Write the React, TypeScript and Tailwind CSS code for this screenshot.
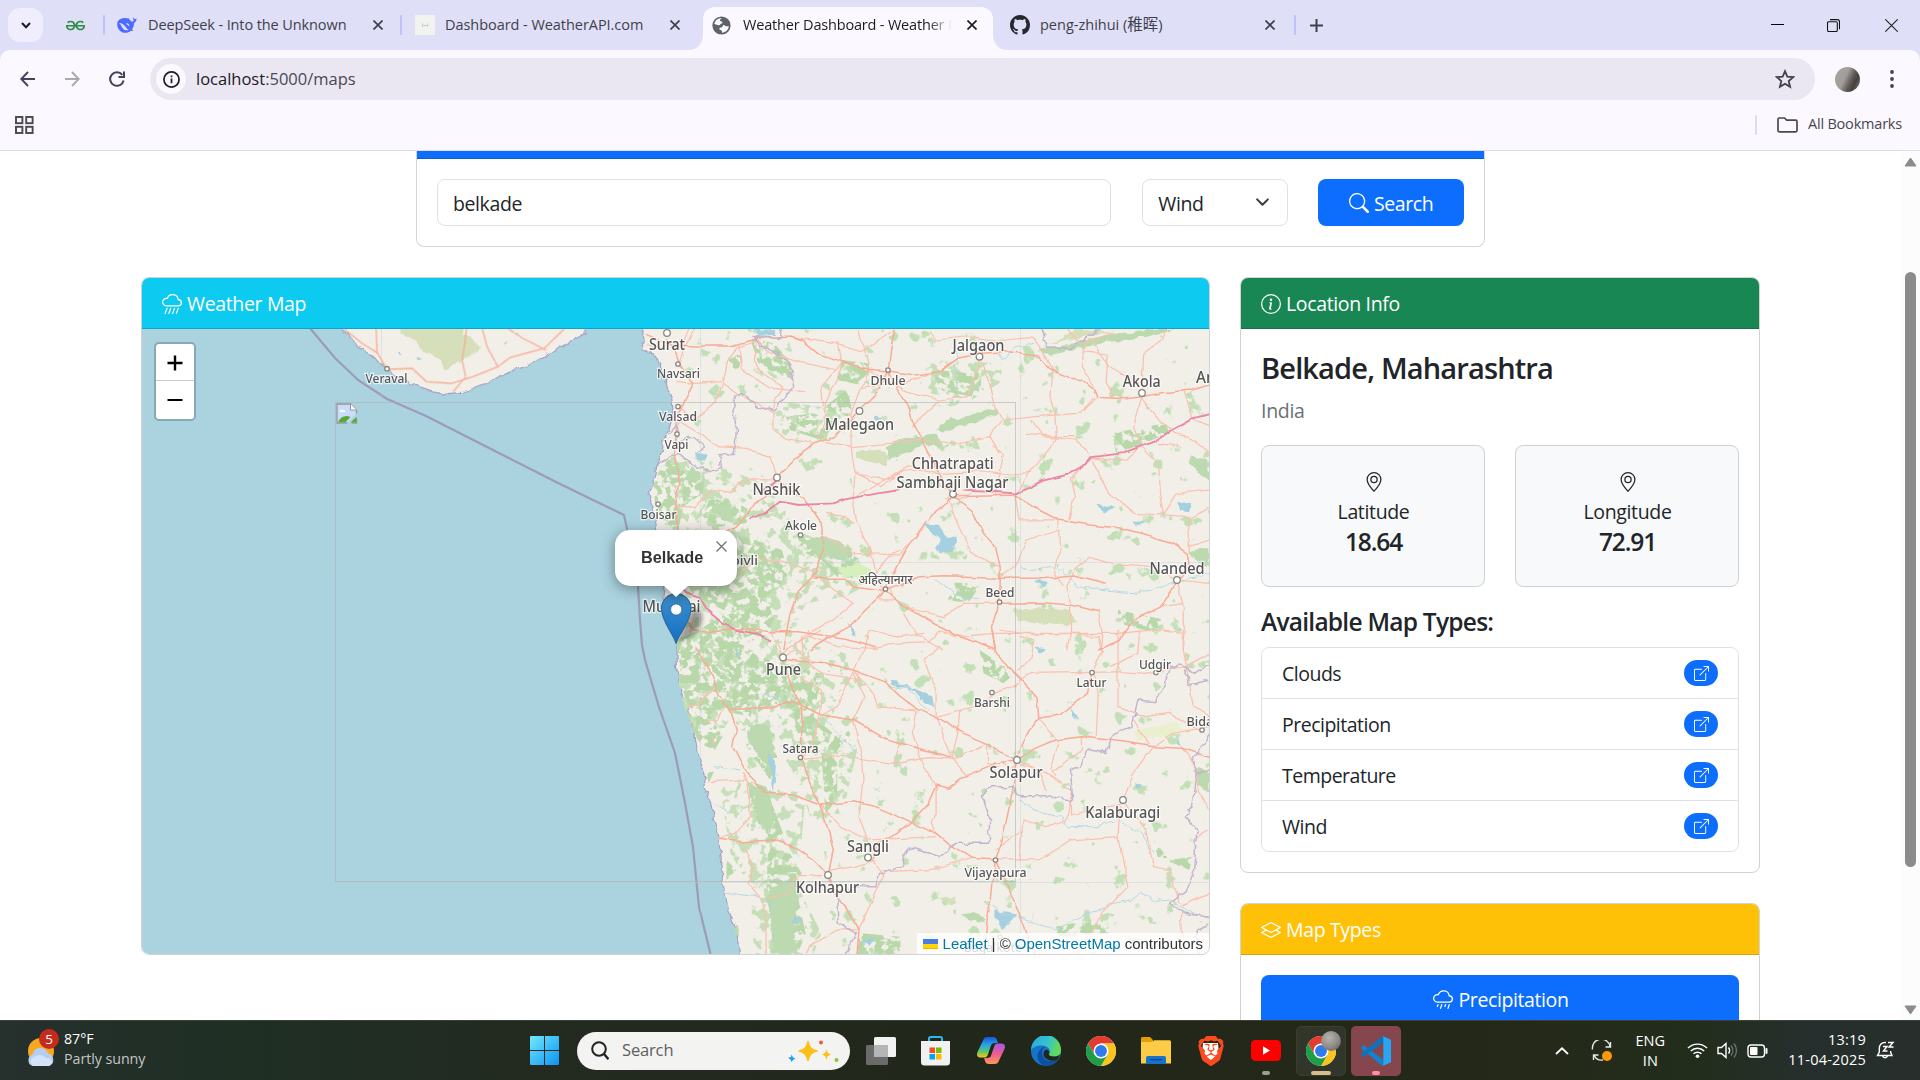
import React from "react";
import {
  BsBoxArrowUpRight,
  BsCloudRain,
  BsCloudRainHeavy,
  BsGeoAlt,
  BsGithub,
  BsInfoCircle,
  BsLayers,
  BsSearch,
} from "react-icons/bs";
import { SiBrave, SiGeeksforgeeks } from "react-icons/si";

/* ---------- Browser chrome ---------- */

function CloseMark({ color = "#3f3f4c" }: { color?: string }) {
  return (
    <svg viewBox="0 0 10 10" className="size-[10px] shrink-0" stroke={color} strokeWidth="1.7">
      <path d="M0.5 0.5L9.5 9.5M9.5 0.5L0.5 9.5" />
    </svg>
  );
}

function Divider() {
  return <div className="h-5 w-[2px] shrink-0 rounded-full bg-[#bfc1fb]" />;
}

function TabStrip() {
  return (
    <div className="flex h-[50px] shrink-0 items-center bg-[#dfdff7] pl-2 text-[14.5px] text-[#3f3f4c]">
      <div className="flex h-[34px] w-[35px] items-center justify-center rounded-[12px] bg-[#f0edff]">
        <svg viewBox="0 0 10 7" className="h-[7px] w-[10px]" fill="none" stroke="#1c1b23" strokeWidth="2">
          <path d="M1 1L5 5.2L9 1" />
        </svg>
      </div>
      <div className="flex w-[60px] justify-center pl-1">
        <SiGeeksforgeeks className="size-[19px] text-[#2f8d46]" />
      </div>
      <Divider />
      <div className="flex w-[295px] items-center pl-[12px]">
        <svg viewBox="0 0 20 16" className="h-4 w-5 shrink-0" fill="#4d6bfe">
          <path d="M19.6 1.6c-.7.6-1.5.5-2.2.3-.5-.6-.7-1.1-1.3-1.7-.2.9 0 1.8.4 2.5.3.7-.2 1.500-.9 2.100-1.300-.400-2.100-1.300-3.100-2.100-.5-.4.200-1-.4-1.200C7.500.2 2.300.8.700 4.700c-1.200 3.400-.2 7 2.500 9.300 3.300 2.800 8.200 2.100 10.500-.3 1 .2 1.900.4 2.600 0-.3-.6-1-.8-1.500-1.200 1.700-1.900 2.200-4.200 2.100-6.300 1.500-.8 2.700-2.400 2.700-4.600z" />
          <path d="M2 6c3-.6 5.500 2 7 4.500.8 1.300 1.800 2 2.800 2.400-2 .9-4 .4-5.400-.9C4.600 10.300 4.300 7.500 2 6z" fill="#dfdff7" />
          <path d="M9 6.500c1.500-.8 3.300.6 3.500 2.500-1.200.2-1.400-.9-2.200-1.300-.4-.3-1-.6-1.300-1.200z" fill="#dfdff7" />
        </svg>
        <span className="ml-[11px] w-[225px] whitespace-nowrap tracking-[-0.1px]">DeepSeek - Into the Unknown</span>
        <CloseMark />
      </div>
      <Divider />
      <div className="flex w-[301px] items-center pl-[13px]">
        <span className="flex size-5 shrink-0 items-center justify-center bg-[#f1f3ee] text-[6px] text-[#8fae6e]">i~i</span>
        <span className="ml-[10px] w-[225px] whitespace-nowrap tracking-[-0.05px]">Dashboard - WeatherAPI.com</span>
        <CloseMark />
      </div>
      <div className="relative flex h-[43px] w-[290px] items-center self-end rounded-t-[12px] bg-[#fbf8ff] pb-[7px] pl-[9px] text-[#1c1b23]">
        <svg viewBox="0 0 15 15" className="absolute bottom-0 -left-[15px] size-[15px]" fill="#fbf8ff">
          <path d="M15 0V15H0C9 15 15 9 15 0z" />
        </svg>
        <svg viewBox="0 0 15 15" className="absolute -right-[15px] bottom-0 size-[15px]" fill="#fbf8ff">
          <path d="M0 0V15H15C6 15 0 9 0 0z" />
        </svg>
        <svg viewBox="0 0 20 20" className="size-[19px] shrink-0">
          <circle cx="10" cy="10" r="9.6" fill="#5f6368" />
          <path d="M10.500 2.500c-1.500.3-2.500 1.500-2 2.600.6 1 2.500.3 2.600 1.700 0 1.300-1.800.9-2.300 1.900-.4 1-1.800 1.200-3 .8L2.500 8.500C3 5 6 2 10.500 2.500zM12 9.500c1.500 0 1.500 1.300 3 1.300h2.700c-.4 3.700-3.200 6.500-7.200 6.700.2-1.800-.3-2.500-1.600-2.700-1.300-.2-1.400-1.700-.6-2.400 1-.8 2.300.2 2.700-1 .2-.8.200-1.700 1-1.900z" fill="#fbf8ff" />
        </svg>
        <span className="ml-3 w-[224px] overflow-hidden whitespace-nowrap tracking-[-0.18px]">
          <span className="block w-[209px] overflow-hidden [mask-image:linear-gradient(to_right,#000_185px,transparent_209px)]">
            Weather Dashboard - Weather Maps
          </span>
        </span>
        <CloseMark color="#1c1b23" />
      </div>
      <div className="flex w-[301px] items-center pl-[17px]">
        <BsGithub className="size-[20px] shrink-0 text-[#24292f]" />
        <span className="ml-[10px] w-[225px] whitespace-nowrap">peng-zhihui (<span className="text-[15.5px]">稚晖</span>)</span>
        <CloseMark />
      </div>
      <Divider />
      <svg viewBox="0 0 13 13" className="ml-[14px] size-[13px]" stroke="#3f3f4c" strokeWidth="2">
        <path d="M6.500 0V13M0 6.500H13" />
      </svg>
      <div className="ml-auto flex items-center pr-[22px]">
        <svg viewBox="0 0 13 13" className="size-[13px]" stroke="#000" strokeWidth="1">
          <path d="M0 5.500H13" />
        </svg>
        <svg viewBox="0 0 13 13" className="ml-[43px] size-[13px]" stroke="#111" strokeWidth="1.100" fill="none">
          <rect x="0.500" y="2.700" width="9.800" height="9.800" rx="1.300" />
          <path d="M3 0.600h7.400a2.100 2.100 0 0 1 2.100 2.100v7.600" />
        </svg>
        <svg viewBox="0 0 13 13" className="ml-[45px] size-[13px]" stroke="#222" strokeWidth="1.100">
          <path d="M0.300 0.300L12.700 12.700M12.700 0.300L0.300 12.700" />
        </svg>
      </div>
    </div>
  );
}

function Toolbar() {
  return (
    <div className="h-[50px] shrink-0 bg-[#dfdff7]">
      <div className="flex h-[50px] items-end rounded-t-[10px] bg-[#fbf8ff]">
        <div className="flex h-[42px] w-[150px] items-center pl-5">
          <svg viewBox="0 0 16 16" className="size-4" fill="none" stroke="#42425a" strokeWidth="1.900">
            <path d="M15 8H1.500M8 1L1.300 8L8 15" />
          </svg>
          <svg viewBox="0 0 16 16" className="ml-[28px] size-4" fill="none" stroke="#a9a8b0" strokeWidth="1.900">
            <path d="M1 8H14.500M8 1L14.700 8L8 15" />
          </svg>
          <svg viewBox="0 0 16 16" className="ml-[29px] size-4" fill="none" stroke="#42425a" strokeWidth="2">
            <path d="M14.600 9.500A6.800 6.800 0 1 1 13.300 3.800M15 0.500V6H9.500" />
          </svg>
        </div>
        <div className="flex h-[42px] w-[1665px] items-center rounded-full bg-[#eae7f2] pr-[20px] pl-[6px]">
          <span className="flex size-[30px] items-center justify-center rounded-full bg-[#fbf8ff]">
            <svg viewBox="0 0 18 18" className="size-[17px]" fill="none" stroke="#1c1b23" strokeWidth="1.800">
              <circle cx="9" cy="9" r="8" />
              <path d="M9 8V13M9 4.800V6.600" />
            </svg>
          </span>
          <span className="ml-[10px] pt-px text-[16.500px] text-[#1c1b23]">
            localhost<span className="text-[#4a4852]">:5000/maps</span>
          </span>
          <svg viewBox="0 0 20 20" className="ml-auto size-5" fill="none" stroke="#42424c" strokeWidth="1.800">
            <path d="M10 2.200L12.300 7.600L18.200 8.100L13.700 12L15.100 17.800L10 14.700L4.900 17.800L6.300 12L1.800 8.100L7.700 7.600Z" />
          </svg>
        </div>
        <div className="flex h-[42px] items-center">
          <span className="ml-5 size-[25px] rounded-full bg-[linear-gradient(115deg,#a9a5a0_0%,#a19d99_40%,#5e5956_62%,#45403e_75%,#8b8784_100%)]" />
          <svg viewBox="0 0 4 20" className="ml-[30px] h-5 w-1" fill="#42425a">
            <circle cx="2" cy="3" r="1.900" />
            <circle cx="2" cy="10" r="1.900" />
            <circle cx="2" cy="17" r="1.900" />
          </svg>
        </div>
      </div>
    </div>
  );
}

function BookmarkBar() {
  return (
    <div className="flex h-[51px] shrink-0 items-center border-b border-[#dedcec] bg-[#fbf8ff] pr-[18px] pl-[15px]">
      <svg viewBox="0 0 19 18" className="h-[18px] w-[19px]" fill="none" stroke="#4a484f" strokeWidth="1.900">
        <rect x="1" y="1" width="6.400" height="6.200" />
        <rect x="11.200" y="1" width="6.400" height="6.200" />
        <rect x="1" y="10.800" width="6.400" height="6.200" />
        <rect x="11.200" y="10.800" width="6.400" height="6.200" />
      </svg>
      <div className="ml-auto h-5 w-[2px] rounded-full bg-[#dcdcfa]" />
      <svg viewBox="0 0 21 16" className="ml-5 h-4 w-[21px]" fill="none" stroke="#4a484f" strokeWidth="1.700">
        <path d="M1 13.500V2.300a1.300 1.300 0 0 1 1.300-1.300H7.500L9.700 3.200H18.700a1.300 1.300 0 0 1 1.300 1.300V13.500a1.300 1.300 0 0 1-1.300 1.300H2.300A1.300 1.300 0 0 1 1 13.500z" />
      </svg>
      <span className="mb-[2px] ml-[10px] text-[14.500px] tracking-[-0.200px] whitespace-nowrap text-[#47464f]">All Bookmarks</span>
    </div>
  );
}

/* ---------- Map ---------- */

type Place = { name: string; x: number; y: number; w: number; big?: boolean; dot?: [number, number] };

const places: Place[] = [
  { name: "Surat", x: 667, y: 350, w: 36, big: true, dot: [667, 333] },
  { name: "Navsari", x: 678.500, y: 378, w: 43, dot: [678, 364] },
  { name: "Valsad", x: 678, y: 420.500, w: 38, dot: [678, 406.500] },
  { name: "Vapi", x: 676.500, y: 449, w: 24, dot: [677, 434] },
  { name: "Dhule", x: 888, y: 384.500, w: 35, dot: [888, 370] },
  { name: "Malegaon", x: 859.500, y: 429.500, w: 69, big: true, dot: [859.500, 411] },
  { name: "Jalgaon", x: 978.500, y: 350.500, w: 52, big: true, dot: [979.500, 356.700] },
  { name: "Akola", x: 1141.700, y: 387, w: 38, big: true, dot: [1142, 393] },
  { name: "Amravati", x: 1229, y: 383, w: 66, big: true },
  { name: "Chhatrapati", x: 952.700, y: 469, w: 82, big: true },
  { name: "Sambhaji Nagar", x: 952.500, y: 488, w: 112, big: true, dot: [953, 494] },
  { name: "Nashik", x: 776.400, y: 495, w: 48, big: true, dot: [777, 477.500] },
  { name: "Boisar", x: 658.500, y: 518.500, w: 36, dot: [658, 504] },
  { name: "Akole", x: 801, y: 530, w: 32, dot: [800.500, 535] },
  { name: "Dombivli", x: 729, y: 565, w: 58 },
  { name: "अहिल्यानगर", x: 885.500, y: 584, w: 54, dot: [885.500, 589] },
  { name: "Beed", x: 1000, y: 597, w: 29, dot: [999.500, 602] },
  { name: "Nanded", x: 1177, y: 574, w: 55, big: true, dot: [1177, 580] },
  { name: "Mumbai", x: 671.500, y: 611.500, w: 58, big: true },
  { name: "Veraval", x: 386.500, y: 383, w: 42, dot: [387, 368.700] },
  { name: "Pune", x: 783.500, y: 674.500, w: 35, big: true, dot: [783, 657.500] },
  { name: "Barshi", x: 992, y: 706.500, w: 36, dot: [992, 692.500] },
  { name: "Latur", x: 1091.500, y: 687, w: 30, dot: [1092, 672.500] },
  { name: "Udgir", x: 1155, y: 668.500, w: 32, dot: [1156, 672.500] },
  { name: "Bidar", x: 1202.500, y: 725.500, w: 32, dot: [1202, 730] },
  { name: "Satara", x: 800.500, y: 753, w: 36, dot: [800.500, 757.500] },
  { name: "Solapur", x: 1016, y: 777.500, w: 53, big: true, dot: [1017, 760] },
  { name: "Kalaburagi", x: 1122.700, y: 818, w: 75, big: true, dot: [1123, 800] },
  { name: "Sangli", x: 868, y: 851.500, w: 42, big: true, dot: [868, 857.500] },
  { name: "Kolhapur", x: 827.500, y: 892.500, w: 63, big: true, dot: [828, 875] },
  { name: "Vijayapura", x: 995.500, y: 877, w: 62, dot: [995.500, 860] },
  { name: "Bagalkote", x: 993, y: 952, w: 58, dot: [1000, 937] },
];

const NORTH = "translate(600 320) scale(0.39541 0.33333)";
const SOUTH = "translate(600 630) scale(0.39541 0.33333)";
const WEST = "translate(130 270) scale(0.35714 0.33333)";

const mainNorth = [
  "M112 45L180 75 240 78 330 78 400 55 480 48 510 60 550 100 610 125 680 148 729 153 800 165 860 155 905 115 960 100 1030 95 1110 105 1140 150 1190 175 1220 180 1250 210 1258 232 1330 236 1370 230 1420 218 1500 210 1541 196",
  "M170 60L190 95 200 130 235 190 215 240 195 290 190 330 188 400 200 480 192 550 195 640",
  "M448 473L500 410 540 370 590 350 640 290 700 220 729 153 735 90 745 27",
  "M448 473L420 530 390 550 365 590 340 620 250 680",
  "M729 153L750 200 780 260 790 300 820 370 850 440 870 490 893 530",
  "M893 530L850 570 810 630 780 680 750 740 722 810 680 860 630 920 570 960 530 990",
  "M893 530L940 570 970 640 1000 680 1012 740 1012 800 1005 870 990 920 1000 990",
  "M448 480L520 540 555 600 568 680 545 760 500 820 480 880 465 990",
  "M893 530L980 528 1050 525 1110 570 1160 600 1240 615 1320 625 1400 650 1450 670 1485 700 1490 740 1460 780",
  "M722 815L640 800 620 775 540 775",
  "M722 812L770 790 810 773 870 770 1012 775 1100 775 1200 765 1280 790",
  "M722 815L760 850 830 900 900 945 1000 990",
  "M1010 850L1120 848 1190 855 1260 875",
  "M1460 780L1420 860 1350 900 1310 960 1260 990",
  "M165 830L190 860 240 930 290 935 360 925 430 935 500 935 560 945 620 955 700 980",
];

const minorNorth = [
  "M225 27L205 75M240 27L215 75 200 130",
  "M195 185L240 190 310 185 320 120 350 80 395 65",
  "M310 190L350 225 400 250 440 280 440 330 470 355 540 370",
  "M195 300L250 340 300 380 370 385 430 410 448 470",
  "M200 260L240 300 290 250 310 190M400 60L390 120 410 160 460 205 440 240 440 280",
  "M395 60L430 100 500 125 600 150M350 75L360 150 430 205 520 215",
  "M650 27L680 130 675 180 660 200 635 280 635 380 645 460 640 540 650 610 680 680 695 760 715 810",
  "M600 70L610 140 600 180 570 250 565 330 550 360",
  "M480 50L590 70 660 95 720 50 745 27M610 130L560 200 565 260",
  "M660 205L780 185 850 155M680 150L780 215 860 240 930 230 960 120",
  "M860 240L790 315M570 365L640 380 730 370 820 360 900 370 985 350 1015 300",
  "M450 480L360 480 330 520 280 510 240 560 195 560",
  "M645 460L710 500 760 455 800 450 850 440M650 465L720 480 760 460",
  "M650 525L780 440 860 460 960 455 1040 465 1090 460",
  "M1090 300L1120 350 1200 360 1240 400M1080 340L1155 350 1200 350",
  "M960 110L985 180 1000 260 1020 300 1100 290 1210 280 1250 232",
  "M1052 520L1090 450 1120 410 1155 360 1150 280 1140 240 1145 150 1130 110 1090 50",
  "M1258 232L1240 180 1220 140 1222 90 1230 60",
  "M1222 95L1285 105 1280 190 1300 230M1220 270L1255 235",
  "M1370 230L1350 320 1370 380 1410 430 1415 520 1425 585",
  "M1370 210L1375 100 1420 60 1430 27M1360 190L1290 140 1240 60",
  "M1370 235L1420 310 1450 340 1490 350 1541 400M1410 370L1470 380",
  "M1240 415L1190 480 1200 530 1185 600M1240 415L1330 420 1365 380M1245 425L1290 520 1350 580 1420 585",
  "M1425 585L1490 590 1490 700M1541 560L1490 600M1541 660L1490 680",
  "M1425 585L1460 520 1541 510M1480 215L1500 300 1541 320",
  "M1460 780L1400 740 1300 730 1240 710 1200 750 1180 800 1190 850",
  "M1160 600L1165 680 1150 760 1170 800M1165 630L1080 660 1050 740 1015 770",
  "M1010 850L920 850 870 890 800 870 760 850M1190 855L1190 940 1180 990",
  "M1460 780L1475 860 1475 990M1460 780L1541 790M1475 850L1420 860",
  "M1260 870L1270 940 1265 990M1010 930L1100 945 1190 940 1310 940 1400 930 1475 940",
  "M570 580L620 590 640 610M568 650L640 700 760 705 780 670",
  "M555 780L640 850 590 900 530 940 500 970M715 815L705 840 740 840 735 810",
  "M695 760L740 700 760 690M870 535L910 540 930 530M893 515L860 500 850 440",
  "M545 760L460 720 400 720 350 760M1010 740L940 700 895 590 880 530",
  "M990 380L1020 400 1010 470 1000 525M985 350L1010 400M1050 530L1060 600 1160 600",
  "M120 75L160 85M250 680L230 740 240 800M200 820L240 870 230 940",
  "M830 27L850 60 930 50 1000 60 1090 50M960 100L1000 60",
  "M770 880L800 940 870 990M1185 27L1210 60 1240 60 1300 40",
];

const mainSouth = [
  "M464 88L520 95 560 97 640 120 720 155 760 200 800 235 850 262 920 310 980 340 1010 365 1053 388",
  "M464 90L480 160 510 230 510 380 530 460 555 525 580 610 590 660 577 735 600 800 640 870 655 900 650 972",
  "M1053 390L1000 400 920 440 880 475 850 465 830 520 780 585 740 620 700 640 690 690",
  "M1053 390L1045 470 1030 560 1015 640 1000 690 990 800 980 860 970 972",
  "M1000 690L1060 850 1100 972",
  "M1053 390L1080 310 1110 265 1160 255 1230 190 1244 130",
  "M1053 390L1100 355 1150 330 1220 320 1320 335 1400 350 1470 355 1541 382",
  "M1110 265L1105 200 1060 140 1000 70 992 0",
  "M240 50L270 100 300 190 330 240 345 300 335 350 370 430 420 490 490 495 555 525",
  "M555 525L640 515 700 530 780 575 850 610 880 640 940 685 1000 690",
  "M300 628L360 635 440 630 490 650 540 690 577 735",
  "M330 240L430 230 490 215 560 255 640 270 720 325 820 360 885 380",
];

const minorSouth = [
  "M464 70L500 40 560 0M464 85L500 60 530 90 640 120M430 0L464 80",
  "M510 20L515 90 560 130 660 150 640 120M530 0L530 20 600 50 700 55 740 40 830 35 860 0",
  "M640 120L670 60 680 0M640 125L600 230 560 255",
  "M480 120L560 180 555 250 540 340 510 385",
  "M650 130L690 190 700 230 800 240M640 130L670 200 640 270 660 350 665 450 655 560 690 670",
  "M510 385L600 375 740 400 830 380 900 385 980 340",
  "M800 235L790 310 820 410 850 465M850 262L870 330 890 385 930 440",
  "M860 50L820 90 850 180 850 262M850 260L910 240 960 225 1000 190 1060 160",
  "M910 240L905 310 890 380M760 330L740 400M980 340L980 400 1010 410",
  "M555 525L610 590 680 630 760 625 850 620M850 470L850 550 840 580 850 610",
  "M360 640L385 710 375 760 410 810 420 870 420 972M300 630L340 610 380 560 375 460 360 430",
  "M420 800L470 790 500 740 560 740M655 900L600 900 540 940 520 972",
  "M577 725L640 710 700 690M690 685L715 740 680 830 655 900M715 725L830 720 940 685",
  "M1000 690L1110 690 1190 630 1310 620 1315 530",
  "M1323 510L1350 430 1400 350 1450 310 1541 290",
  "M1323 510L1380 600 1400 710 1440 720 1470 830M1310 620L1335 770 1270 850 1240 920 1200 972",
  "M1323 520L1190 555 1190 480 1140 440 1060 390M1060 400L1110 420 1130 480M1060 390L1040 420 1020 400",
  "M1060 155L1090 130 1244 127 1320 125 1380 130 1480 110 1541 70M1290 110L1360 70 1365 0",
  "M1244 127L1270 70 1260 20 1190 10 1000 10M1250 130L1260 190 1255 320",
  "M1310 0L1310 120 1310 230 1380 260 1440 250 1520 300M1480 0L1475 60 1490 150 1500 230 1541 260",
  "M1110 265L1160 340 1140 420 1150 440M1220 320L1220 360 1140 430",
  "M1060 20L1100 30 1090 80 1050 130M1350 270L1390 350M1060 690L1070 570 1130 590 1180 570 1190 510",
  "M1470 830L1541 790M1470 840L1475 972M1470 350L1510 420 1510 480 1541 540M1541 600L1510 620",
  "M280 455L370 450M220 230L250 220 290 170M270 280L300 270 310 240M290 340L280 320",
  "M680 0L760 20 820 10M860 0L900 20 1000 10M1000 660L1070 600",
];

const boundaries = [
  "M455 27L460 55 390 50 410 80 440 95 480 130 490 200 460 240 440 270 400 265 360 220 335 240 345 330 340 400 300 405 305 445 280 455 230 430 200 400 150 430",
  "M175 340L200 310 190 370 240 350 265 380 240 400",
  "M1120 27L1130 80 1190 85 1220 60 1265 27",
  "M1541 1035L1500 1060 1470 1035 1440 1040 1430 1090 1405 1145 1360 1140 1345 1220 1300 1240 1280 1300 1235 1290 1215 1340 1190 1350 1195 1440 1130 1430 1060 1430 1045 1400 980 1400 965 1425 985 1490 985 1570 900 1570 860 1610 780 1580 765 1635 710 1660 700 1700 640 1700 600 1720 605 1810 650 1840 620 1902",
  "M1541 1350L1510 1360 1500 1450 1480 1490 1510 1530 1500 1670 1480 1720 1440 1750 1480 1780 1541 1792",
  "M1480 1050L1490 1095 1541 1080M1541 1240L1520 1290 1500 1320 1510 1360M1541 1810L1510 1830 1515 1902",
];

const forest = [
  "M160 430L185 410 210 450 265 470 260 520 210 560 200 620 165 620 140 560 135 500 150 450z",
  "M275 540L320 535 380 570 370 610 300 620 260 590z",
  "M190 630L340 640 460 690 480 770 420 830 440 900 400 950 330 880 260 840 200 790z",
  "M195 960L250 930 330 870 420 870 440 920 350 960 400 1010 560 1060 540 1190 440 1150 380 1190 300 1170 240 1200 215 1130 195 1060z",
  "M500 640L640 690 680 780 600 770 560 720 500 690z",
  "M380 55L440 70 500 150 470 180 400 130z",
  "M470 290L540 280 600 310 560 360 480 330z",
  "M370 1215L430 1230 450 1320 430 1380 400 1330 365 1270z",
  "M370 1380L420 1400 450 1500 470 1560 420 1570 390 1480z",
  "M425 1580L480 1600 510 1660 500 1730 520 1840 500 1902 430 1902 440 1800 420 1740z",
  "M480 1130L600 1250 650 1220 600 1290 600 1440 570 1480 560 1300 500 1240z",
  "M1290 340L1430 310 1440 340 1330 390z",
  "M330 90L360 110 350 150 320 140z",
  "M610 120L680 130 680 200 600 180z",
  "M900 780L960 800 930 850 880 840z",
  "M960 990L1050 1060 1020 1090 970 1060z",
  "M620 210L640 250 630 290 560 270z",
  "M840 150L960 160 940 230 860 210z",
  "M1310 870L1430 900 1410 940 1310 910z",
  "M220 1180L270 1170 310 1250 290 1290 250 1270z",
  "M1400 1560L1440 1620 1500 1610 1490 1650 1410 1610z",
  "M1150 1820L1280 1790 1290 1840 1160 1850z",
  "M660 1840L760 1850 760 1902 650 1902z",
  "M320 1620L345 1650 320 1680zM270 1360L290 1350 275 1390z",
];

/* Hill ranges where the cover thins out away from the coast. */
const sparseForest = [
  "M180 400L300 440 440 500 470 620 620 690 700 780 620 830 520 850 480 960 620 1000 640 1090 560 1230 660 1240 610 1500 540 1520 500 1380 440 1260 330 1220 230 1240 200 1100 195 950 220 850 190 640 150 560z",
  "M300 1380L520 1420 500 1700 560 1840 540 1902 390 1902 380 1700 330 1600z",
  "M430 240L620 270 640 350 500 370 430 320z",
  "M820 120L1020 130 1010 190 940 240 830 220z",
];

const solidForest = [
  "M725 380L770 355 850 340 868 380 820 375 770 400 730 415z",
  "M850 325L880 300 930 290 1000 265 1010 280 940 310 870 335z",
  "M1115 85L1180 75 1280 45 1400 27 1460 27 1380 50 1270 70 1150 103 1110 98z",
  "M1487 405L1530 415 1541 440 1541 480 1510 460 1490 430z",
  "M1490 700L1520 685 1541 685 1541 740 1510 725z",
  "M512 665L560 650 600 665 640 690 620 720 560 710z",
  "M375 1220L410 1210 440 1240 436 1310 425 1345 405 1320 370 1250z",
  "M380 1390L415 1410 440 1480 430 1540 400 1500z",
  "M430 1700L490 1680 500 1760 490 1850 500 1902 440 1902 430 1800z",
  "M910 1780L940 1775 975 1795 970 1805 930 1800z",
  "M1510 1340L1541 1360 1541 1420 1510 1395z",
  "M230 435L255 460 250 485 215 480zM290 545L330 565 335 610 300 590z",
  "M345 1800L355 1850 340 1840zM925 200L965 175 955 220z",
];

const grassland = [
  "M645 395L700 390 730 405 720 435 680 425 645 415z",
  "M1040 870L1100 865 1180 870 1215 910 1150 915 1060 900z",
  "M570 680L610 685 615 720 575 710z",
  "M860 1735L905 1730 890 1748z",
  "M1130 75L1240 45 1300 35 1210 27 1120 85z",
];

const lakes = [
  "M820 610L860 615 875 650 905 650 895 685 860 700 850 680 860 655 835 640z",
  "M390 30L440 27 440 45 400 48z",
  "M235 400L270 400 265 425 240 420z",
  "M735 1080L780 1100 840 1125 845 1165 820 1145 790 1112 740 1095z",
  "M1000 1770L1055 1780 1020 1830 1000 1800z",
  "M1250 550L1300 560 1280 580z",
  "M1460 550L1495 545 1490 580 1465 575z",
  "M1095 780L1135 785 1120 805z",
  "M690 290L715 295 700 305z",
  "M340 980L350 1000 345 1010zM420 1290L445 1330 440 1420 430 1350z",
  "M1350 600L1375 610 1355 620zM1185 1160L1210 1200 1195 1190z",
  "M660 1860L690 1855 680 1880zM1100 980L1130 985 1110 1000z",
  "M1350 1390L1375 1395 1360 1410zM625 905L650 950 635 945z",
  "M1460 1245L1470 1270 1465 1280zM495 1790L510 1800 490 1815z",
];

const rivers = [
  "M985 1755L1020 1780 1060 1790 1150 1830 1220 1790 1300 1750 1340 1740 1370 1715 1400 1745 1440 1740 1500 1780 1541 1795",
  "M730 1100L780 1110 830 1170M660 715L600 720M650 1300L560 1190",
  "M1060 1440L1100 1470 1170 1490 1180 1520 1260 1520 1310 1500 1370 1540 1400 1600",
  "M850 780L920 840 960 830M1060 740L1100 750 1160 740 1210 800 1280 810 1360 820 1440 790 1541 760",
  "M320 1720L400 1730 440 1760M290 1340L360 1350M410 1120L470 1140M290 1450L330 1480",
  "M1100 70L1050 80 1020 120 985 60M900 60L900 200",
];

function TerrainMap() {
  return (
    <svg viewBox="142 329 1067 625" className="block h-[625px] w-[1067px] rounded-b-[7px] bg-[#aad3df]">
      <defs>
        <filter id="speckle" x="-5%" y="-5%" width="110%" height="110%">
          <feTurbulence type="fractalNoise" baseFrequency="0.12" numOctaves="3" seed="4" result="n" />
          <feColorMatrix in="n" type="matrix" values="0 0 0 0 0  0 0 0 0 0  0 0 0 0 0  0 12 0 0 -5.300" result="m" />
          <feComposite in="SourceGraphic" in2="m" operator="in" result="c" />
        </filter>
        <filter id="sparse" x="-5%" y="-5%" width="110%" height="110%">
          <feTurbulence type="fractalNoise" baseFrequency="0.100" numOctaves="3" seed="11" result="n" />
          <feColorMatrix in="n" type="matrix" values="0 0 0 0 0  0 0 0 0 0  0 0 0 0 0  0 12 0 0 -6.300" result="m" />
          <feComposite in="SourceGraphic" in2="m" operator="in" />
        </filter>
        <filter id="flecks" x="0" y="0" width="100%" height="100%">
          <feTurbulence type="fractalNoise" baseFrequency="0.055" numOctaves="4" seed="21" result="n" />
          <feColorMatrix in="n" type="matrix" values="0 0 0 0 0  0 0 0 0 0  0 0 0 0 0  0 16 0 0 -11" result="m" />
          <feComposite in="SourceGraphic" in2="m" operator="in" />
        </filter>
        <filter id="coast" x="-5%" y="-5%" width="110%" height="110%">
          <feTurbulence type="fractalNoise" baseFrequency="0.11" numOctaves="2" seed="8" />
          <feDisplacementMap in="SourceGraphic" scale="7" xChannelSelector="R" yChannelSelector="G" />
        </filter>
        <filter id="wander" x="-5%" y="-5%" width="110%" height="110%">
          <feTurbulence type="fractalNoise" baseFrequency="0.06" numOctaves="2" seed="3" />
          <feDisplacementMap in="SourceGraphic" scale="5" xChannelSelector="R" yChannelSelector="G" />
        </filter>
        <linearGradient id="pin" x1="0" y1="0" x2="0" y2="1">
          <stop offset="0" stopColor="#3f8fcd" />
          <stop offset="1" stopColor="#126fc6" />
        </linearGradient>
        <filter id="soft">
          <feGaussianBlur stdDeviation="2.200" />
        </filter>
      </defs>

      <g filter="url(#coast)">
        <g transform={NORTH} fill="#f2efe9" stroke="#a79fc0" strokeWidth="1.200" className="[&_path]:[vector-effect:non-scaling-stroke]">
          <path d="M110 -40L108 60 112 92 145 110 160 170 182 240 186 290 175 325 160 360 150 420 140 470 123 512 130 560 140 600 145 650 150 720 165 790 160 850 175 890 180 930 192 975 193 1040 200 1090 212 1130 222 1170 235 1220 240 1270 255 1330 266 1365 270 1410 280 1450 288 1500 300 1550 308 1630 312 1700 325 1770 345 1830 360 1960L1650 1960 1650 -40z" />
        </g>
        <g transform={WEST} fill="#f2efe9" stroke="#a79fc0" strokeWidth="1.200" className="[&_path]:[vector-effect:non-scaling-stroke]">
          <path d="M570 140L600 180 625 212 660 245 700 280 740 312 790 342 850 365 870 376 900 370 940 366 990 342 1050 312 1100 290 1150 264 1200 235 1275 190 1260 140z" />
          <path d="M760 150L755 190 800 210 820 245 870 265 880 298 930 270 985 235 960 205 930 195 940 150z" fill="#d5dfb9" stroke="none" />
          <path d="M750 245L762 247 755 256zM800 265L812 270 802 274zM1050 215L1060 218 1052 222zM1080 185L1092 188 1085 193z" fill="#a5d0df" stroke="none" />
        </g>
      </g>

      <g filter="url(#wander)" transform={WEST} fill="none" stroke="#faab94" strokeWidth="1.300" className="[&_path]:[vector-effect:non-scaling-stroke]">
        <path d="M600 177L650 220 692 248 720 298 790 295 830 335 900 340 960 320 1030 290 1065 262 1160 235 1215 177M688 150L692 248M945 150L935 240 930 270 940 320 905 365M985 170L1000 230 1030 290M1060 177L1100 205 1165 240" />
      </g>

      <path filter="url(#flecks)" d="M690 329H1209V954H760L735 760 700 560 680 400z" fill="#c2dfb6" />
      <g filter="url(#sparse)">
        <g transform={NORTH} fill="#c6dfb9">
          {sparseForest.map((d) => (
            <path key={d} d={d} />
          ))}
        </g>
      </g>
      <g filter="url(#speckle)">
        <g transform={NORTH} fill="#b8d8aa">
          {forest.map((d) => (
            <path key={d} d={d} />
          ))}
        </g>
      </g>
      <g filter="url(#coast)">
        <g transform={NORTH}>
          {grassland.map((d) => (
            <path key={d} d={d} fill="#d5dfb9" />
          ))}
          {solidForest.map((d) => (
            <path key={d} d={d} fill="#bcd9b0" />
          ))}
          <path d="M600 750L650 730 690 750 670 775 620 770z" fill="#d6efbd" />
          <path d="M1350 1235L1400 1220 1450 1210 1480 1230 1430 1250 1360 1260z" fill="#eaf0cd" />
          {lakes.map((d) => (
            <path key={d} d={d} fill="#a5d0df" />
          ))}
          <g fill="none" stroke="#b4d8e2" strokeWidth="1" className="[&_path]:[vector-effect:non-scaling-stroke]">
            {rivers.map((d) => (
              <path key={d} d={d} />
            ))}
          </g>
        </g>
      </g>

      <g filter="url(#wander)" fill="none" strokeLinejoin="round" className="[&_path]:[vector-effect:non-scaling-stroke]">
        <g stroke="#fbc0ae" strokeWidth="1.250">
          <g transform={NORTH}>
            {minorNorth.map((d) => (
              <path key={d} d={d} />
            ))}
          </g>
          <g transform={SOUTH}>
            {minorSouth.map((d) => (
              <path key={d} d={d} />
            ))}
          </g>
        </g>
        <g stroke="#faab94" strokeWidth="1.500">
          <g transform={NORTH}>
            {mainNorth.map((d) => (
              <path key={d} d={d} />
            ))}
          </g>
          <g transform={SOUTH}>
            {mainSouth.map((d) => (
              <path key={d} d={d} />
            ))}
          </g>
        </g>
        <g transform={NORTH} stroke="#eb86a4" strokeWidth="1.900">
          <path d="M380 595L420 580 455 545 500 555 590 550 620 538 700 520 760 510M915 512L1000 516 1052 520 1090 500 1120 482 1190 462 1215 445 1240 412 1320 400 1400 365 1440 335 1500 295 1541 282M405 520L450 480" />
          <path d="M170 830L200 810 250 830 270 870 310 910 345 930 390 940 430 965" />
        </g>
      </g>

      <g filter="url(#coast)">
        <g transform={NORTH} fill="none" stroke="#c3b5ce" strokeWidth="1.500" className="[&_path]:[vector-effect:non-scaling-stroke]">
          {boundaries.map((d) => (
            <path key={d} d={d} />
          ))}
        </g>
      </g>

      <path
        d="M309 327L335 358 358 380 387 399 426 416 558 483 624 515 633 556 638 587 640 620 642 645 645 660 659 707 675 753 685 803 693 847 699 907 711 956"
        fill="none"
        stroke="#9d9bb8"
        strokeWidth="2.200"
      />

      <g fill="none" strokeWidth="1">
        <path d="M381.500 329V954M142 562.500H1209M700.500 329V954M1020.500 329V954M142 882.500H1209" stroke="#b9c9cd" strokeOpacity="0.350" />
        <rect x="335.500" y="402.500" width="680" height="479" stroke="#aeb2b4" strokeOpacity="0.600" />
      </g>
      <g transform="translate(336.500 403.500)">
        <path d="M0.500 0.500H14L20 6.500V19.500H0.500z" fill="#c8dcfb" stroke="#98999c" strokeWidth="1.300" />
        <path d="M14 0.500V6.500H20" fill="#fff" stroke="#98999c" />
        <path d="M3 8a2.500 2.500 0 0 1 4-1.500A2.500 2.500 0 0 1 9 8.500H3z" fill="#fff" />
        <path d="M1.500 18.800C4 13 9 11 14 13.500L9 18.800z" fill="#56ab36" />
        <path d="M21 9L9.500 21H14L21 14z" fill="#aad3df" />
        <path d="M14 19L20 13.500V19z" fill="#56ab36" />
      </g>

      <g fontFamily="'Noto Sans', 'Open Sans', sans-serif" fontWeight="500" fill="#555" textAnchor="middle">
        {places.map((p) => (
          <g key={p.name}>
            {p.dot && (
              <circle cx={p.dot[0]} cy={p.dot[1]} r={p.big ? 3.300 : 2.200} fill="#fff" stroke="#87877f" strokeWidth="1.300" />
            )}
            <text
              x={p.x}
              y={p.y}
              fontSize={p.big ? 15.500 : 12.800}
              textLength={p.w}
              lengthAdjust="spacingAndGlyphs"
              stroke="#fff"
              strokeOpacity="0.700"
              strokeWidth="2.500"
              paintOrder="stroke"
            >
              {p.name}
            </text>
          </g>
        ))}
      </g>

      <path d="M677 642L690 612Q704 604 702 622Q696 638 677 642z" fill="#000" opacity="0.350" filter="url(#soft)" />
      <path
        d="M676 643.500C674 634 661.500 622 661.500 608.500A14.700 14.700 0 0 1 690.900 608.500C690.900 622 678.500 634 676 643.500z"
        fill="url(#pin)"
        stroke="#2e6c97"
        strokeWidth="1.200"
      />
      <circle cx="676.200" cy="609.500" r="5.600" fill="#fff" stroke="#2e6c97" strokeWidth="0.800" />
    </svg>
  );
}

function ZoomControl() {
  return (
    <div className="absolute top-[13px] left-[12px] rounded-[5px] border-[2px] border-[#88a9b2] bg-white">
      <div className="flex h-[37px] w-[38px] items-center justify-center border-b border-[#ccc]">
        <svg viewBox="0 0 16 16" className="mt-px size-4" stroke="#000" strokeWidth="2.400">
          <path d="M8 0.500V15.500M0.500 8H15.500" />
        </svg>
      </div>
      <div className="flex h-[38px] w-[38px] items-center justify-center">
        <svg viewBox="0 0 16 16" className="size-4" stroke="#000" strokeWidth="2">
          <path d="M0.500 8H15.500" />
        </svg>
      </div>
    </div>
  );
}

function MapPopup() {
  return (
    <div className="absolute top-[201px] left-[473px] w-[122px] drop-shadow-[0_3px_7px_rgba(0,0,0,0.400)]">
      <div className="flex h-[56px] items-center rounded-[15px] bg-white pb-[2px] pl-[26px]">
        <span className="font-['Liberation_Sans',sans-serif] text-[16.250px] font-bold text-[#333]">Belkade</span>
        <svg viewBox="0 0 11 11" className="absolute top-[11px] right-[10px] size-[11px]" stroke="#757575" strokeWidth="1.400">
          <path d="M0.500 0.500L10.500 10.500M10.500 0.500L0.500 10.500" />
        </svg>
      </div>
      <svg viewBox="0 0 26 12" className="mx-auto -mt-px h-3 w-[26px]" fill="#fff">
        <path d="M0 0H26L13 12z" />
      </svg>
    </div>
  );
}

/* ---------- Page ---------- */

function CardHeader({ icon, title, tone }: { icon: React.ReactNode; title: string; tone: string }) {
  return (
    <div className={`flex h-[51px] items-center gap-[5px] rounded-t-[7px] border-b pt-px pl-5 text-[19.500px] text-white ${tone}`}>
      {icon}
      <span className="whitespace-nowrap tracking-[-0.350px]">{title}</span>
    </div>
  );
}

function SearchCard() {
  return (
    <div className="ml-[416px] h-[96px] w-[1069px] rounded-b-[8px] border border-t-0 border-[#d3d4d5] bg-white">
      <div className="h-2 border-b border-[#0b5cd5] bg-[#0d6efd]" />
      <div className="flex px-5 pt-5 text-[19.500px] tracking-[-0.400px] text-[#212529]">
        <div className="flex h-[47px] w-[675px] items-center rounded-[8px] border border-[#dee2e6] pt-[2px] pl-[15px]">belkade</div>
        <div className="ml-[31px] flex h-[47px] w-[146px] items-center justify-between rounded-[8px] border border-[#dee2e6] pt-[2px] pr-[17px] pl-[15px]">
          Wind
          <svg viewBox="0 0 16 10" className="mb-[3px] h-[9px] w-[15px]" fill="none" stroke="#343a40" strokeWidth="2.200" strokeLinecap="round" strokeLinejoin="round">
            <path d="M2 1.500L8 7.500L14 1.500" />
          </svg>
        </div>
        <div className="ml-[30px] flex h-[47px] w-[146px] items-center justify-center gap-[5px] rounded-[8px] bg-[#0d6efd] text-white">
          <BsSearch className="size-5" />
          <span className="pt-[2px]">Search</span>
        </div>
      </div>
    </div>
  );
}

function WeatherMapCard() {
  return (
    <div className="h-[678px] w-[1069px] rounded-[8px] border border-[#cfd3d5]">
      <CardHeader icon={<BsCloudRainHeavy className="size-5" />} title="Weather Map" tone="bg-[#0dcaf0] border-[#0ba5cf]" />
      <div className="relative overflow-hidden rounded-b-[7px]">
        <TerrainMap />
        <ZoomControl />
        <MapPopup />
        <div className="absolute right-0 bottom-0 flex h-[21px] items-center bg-white/80 pt-px pr-[6px] pl-[6px] font-['Liberation_Sans',sans-serif] text-[15px] whitespace-nowrap text-[#333]">
          <span className="mr-[5px] flex h-[10px] w-[15px] flex-col">
            <span className="h-[5px] bg-[#4c7be1]" />
            <span className="h-[4px] bg-[#ffd500]" />
            <span className="h-px bg-[#e0bc00]" />
          </span>
          <span className="text-[#0078a8]">Leaflet</span>
          <span className="mx-1">| ©</span>
          <span className="text-[#0078a8]">OpenStreetMap</span>
          <span className="ml-1">contributors</span>
        </div>
      </div>
    </div>
  );
}

function Coordinate({ label, value }: { label: string; value: string }) {
  return (
    <div className="flex h-[142px] w-[224px] flex-col items-center rounded-[8px] border border-[#ced0d2] bg-[#f8f9fa] pt-[26px] pl-px">
      <BsGeoAlt className="size-5" />
      <span className="mt-[5px] text-[19.500px] leading-[30px] tracking-[-0.350px]">{label}</span>
      <span className="text-[24.500px] leading-[30px] font-semibold tracking-[-1.100px]">{value}</span>
    </div>
  );
}

function LocationCard() {
  return (
    <div className="h-[596px] w-[520px] rounded-[8px] border border-[#d0d2d3] bg-white text-[#212529]">
      <CardHeader icon={<BsInfoCircle className="size-5" />} title="Location Info" tone="bg-[#198754] border-[#157147]" />
      <div className="px-5 pt-[21px]">
        <h4 className="text-[29px] leading-[36px] font-semibold tracking-[-0.850px]">Belkade, Maharashtra</h4>
        <p className="mt-[10px] text-[19.500px] leading-[30px] tracking-[-0.300px] text-[#6a7076]">India</p>
        <div className="mt-[19px] flex justify-between">
          <Coordinate label="Latitude" value="18.64" />
          <Coordinate label="Longitude" value="72.91" />
        </div>
        <h5 className="mt-[20px] text-[24.500px] leading-[30px] font-semibold tracking-[-0.750px]">Available Map Types:</h5>
        <div className="mt-[10px] rounded-[8px] border border-[#dee2e6]">
          {["Clouds", "Precipitation", "Temperature", "Wind"].map((name) => (
            <div key={name} className="flex h-[51px] items-center justify-between border-b border-[#dee2e6] px-5 pt-px text-[19.500px] tracking-[-0.500px] last:h-[50px] last:border-b-0">
              {name}
              <span className="mb-px flex h-[26px] w-[34px] items-center justify-center rounded-full bg-[#0d6efd] text-white">
                <BsBoxArrowUpRight className="size-[15px]" />
              </span>
            </div>
          ))}
        </div>
      </div>
    </div>
  );
}

function MapTypesCard() {
  return (
    <div className="h-[200px] w-[520px] rounded-[8px] border border-[#d0d2d3] bg-white">
      <CardHeader icon={<BsLayers className="size-5" />} title="Map Types" tone="bg-[#ffc107] border-[#d9a406]" />
      <div className="px-5 pt-5">
        <div className="flex h-[47px] items-start justify-center gap-[6px] rounded-t-[8px] bg-[#0d6efd] pt-[11px] pl-px text-[19.500px] leading-[28px] tracking-[-0.400px] text-white">
          <BsCloudRain className="mt-[3px] size-5" />
          <span>Precipitation</span>
        </div>
      </div>
    </div>
  );
}

function Page() {
  return (
    <div className="flex h-[869px] shrink-0 overflow-hidden bg-white">
      <div className="w-[1901px]">
        <SearchCard />
        <div className="mt-[30px] ml-[141px] flex gap-[30px]">
          <WeatherMapCard />
          <div className="flex flex-col gap-[30px]">
            <LocationCard />
            <MapTypesCard />
          </div>
        </div>
      </div>
      <div className="flex w-[19px] flex-col items-center bg-[#fcfcfc] pt-[6px] pb-[5px]">
        <svg viewBox="0 0 13 10" className="h-[10px] w-[13px]" fill="#8b8b8b" stroke="#8b8b8b" strokeLinejoin="round">
          <path d="M6.500 1L12 9H1z" />
        </svg>
        <div className="mt-[105px] h-[595px] w-[11px] rounded-full bg-[#8b8b8b]" />
        <svg viewBox="0 0 13 10" className="mt-auto h-[10px] w-[13px]" fill="#8b8b8b" stroke="#8b8b8b" strokeLinejoin="round">
          <path d="M6.500 9L12 1H1z" />
        </svg>
      </div>
    </div>
  );
}

/* ---------- Taskbar ---------- */

function Chrome() {
  return (
    <svg viewBox="0 0 48 48" className="size-[30px]">
      <circle cx="24" cy="24" r="24" fill="#fff" />
      <path d="M24 12H44.800A24 24 0 0 0 3.200 12L13.600 30z" fill="#e33b2e" />
      <path d="M34.400 30L24 48A24 24 0 0 0 44.800 12H24z" fill="#fcc31e" />
      <path d="M13.600 30L3.200 12A24 24 0 0 0 24 48L34.400 30z" fill="#1f9d49" />
      <circle cx="24" cy="24" r="12" fill="#fff" />
      <circle cx="24" cy="24" r="9.500" fill="#2f7bee" />
    </svg>
  );
}

function Sparkles() {
  return (
    <svg viewBox="0 0 52 22" className="h-[22px] w-[52px]">
      <path d="M20 1.500C21 7.500 23.500 10 29 11C23.500 12 21 14.500 20 20.500C19 14.500 16.500 12 11 11C16.500 10 19 7.500 20 1.500z" fill="#fbbf16" stroke="#fbbf16" strokeWidth="1.500" strokeLinejoin="round" />
      <path d="M38.500 9C39.200 12.800 40 13.500 43.500 14.500C40 15.500 39.200 16.200 38.500 20C37.800 16.200 37 15.500 33.500 14.500C37 13.500 37.800 12.800 38.500 9z" fill="#fbbf16" />
      <path d="M3.500 14.500L5 17.500L7.500 18.500L5 20L3.500 22L2.500 19.500L0 18L3 17z" fill="#1aa0e8" />
      <circle cx="33" cy="2.500" r="2" fill="#ef5a36" />
      <circle cx="48.500" cy="20" r="2" fill="#8cc63f" />
    </svg>
  );
}

function TaskbarIcons() {
  return (
    <div className="flex h-[60px] items-center">
      <svg viewBox="0 0 30 28" className="ml-4 h-7 w-[30px]">
        <rect x="8" y="0" width="22" height="20" rx="1.500" fill="#f2f2f2" />
        <rect x="0" y="8" width="22" height="20" rx="1.500" fill="#6b6b6b" />
        <rect x="8" y="8" width="14" height="12" fill="#b5b5b5" />
      </svg>
      <svg viewBox="0 0 29 30" className="ml-[25px] h-[30px] w-[29px]">
        <path d="M8 6V2.500a1.500 1.500 0 0 1 1.500-1.500h10A1.500 1.500 0 0 1 21 2.500V6" fill="none" stroke="#2bb7ec" strokeWidth="2" />
        <path d="M0 5H29V26a3.500 3.500 0 0 1-3.500 3.500H3.500A3.500 3.500 0 0 1 0 26z" fill="#f1f1f1" />
        <rect x="8.500" y="11.500" width="5.500" height="5.500" fill="#f25022" />
        <rect x="15" y="11.500" width="5.500" height="5.500" fill="#7fba00" />
        <rect x="8.500" y="18" width="5.500" height="5.500" fill="#00a4ef" />
        <rect x="15" y="18" width="5.500" height="5.500" fill="#ffb900" />
      </svg>
      <svg viewBox="0 0 28 27" className="ml-[27px] h-[27px] w-7">
        <defs>
          <linearGradient id="cpa" x1="0" y1="0" x2="0" y2="1">
            <stop offset="0" stopColor="#1b55d6" />
            <stop offset="0.400" stopColor="#25a7e8" />
            <stop offset="0.700" stopColor="#5dc46a" />
            <stop offset="1" stopColor="#f4c81c" />
          </linearGradient>
          <linearGradient id="cpb" x1="0" y1="0" x2="0" y2="1">
            <stop offset="0" stopColor="#a259e6" />
            <stop offset="0.500" stopColor="#ef5b90" />
            <stop offset="1" stopColor="#fb9a55" />
          </linearGradient>
        </defs>
        <path d="M6 3.500C6.800 1 8 0 10.500 0H16C18.500 0 19.500 1 20.200 3.500L20.800 6H18C15.500 6 14.500 7 13.800 9L11 17.500C10 20 9 20.500 6.500 20.500H4C0.500 20.500-0.800 18.500 0.500 15z" fill="url(#cpa)" />
        <path d="M22 23.500C21.200 26 20 27 17.500 27H12C9.500 27 8.500 26 7.800 23.500L7.200 21H10C12.500 21 13.500 20 14.200 18L17 9.500C18 7 19 6.500 21.500 6.500H24C27.500 6.500 28.800 8.500 27.500 12z" fill="url(#cpb)" />
        <path d="M12.600 13.500L14.800 7.500H17.600L15 15 13.200 20H10.500z" fill="#222718" />
      </svg>
      <svg viewBox="0 0 30 30" className="ml-[26px] size-[30px]">
        <defs>
          <linearGradient id="edg" x1="0" y1="0" x2="1" y2="0.300">
            <stop offset="0" stopColor="#2aa5e0" />
            <stop offset="0.600" stopColor="#35c3cf" />
            <stop offset="1" stopColor="#63d95a" />
          </linearGradient>
        </defs>
        <circle cx="15" cy="15" r="15" fill="#1574c9" />
        <path d="M0 14A15 15 0 0 1 30 14C30.500 19 26.500 20.500 23.500 20.500C20 20.500 17.500 19.500 17.800 18.500C20 16 19 11.500 14.500 10.200C9 8.500 3 10 0 14z" fill="url(#edg)" />
        <path d="M14.500 10.500C11 12.500 9.800 17 12 21C14 24.800 19.500 26 26.500 23.800C23.500 28.500 18.500 30.300 14 30C8 28 5.500 23 7 17.500C8 14 11 11 14.500 10.500z" fill="#0c4f9e" />
        <path d="M17.800 18.500C17.500 19.500 20 20.600 23.500 20.500C25.500 20.500 27.500 20 28.800 18.500C28.500 20.500 27.800 22.200 26.500 23.800C20 26 14.500 23.500 12.800 20C12 17 13 14.500 15 13.800C18 13.500 19 16.500 17.800 18.500z" fill="#222718" />
      </svg>
      <span className="ml-[25px]">
        <Chrome />
      </span>
      <svg viewBox="0 0 30 27" className="ml-[25px] h-[27px] w-[30px]">
        <path d="M0 1.500A1.500 1.500 0 0 1 1.500 0H9L12 3V8H0z" fill="#e2a005" />
        <path d="M0 5H11.500L13 3.200H28.500A1.500 1.500 0 0 1 30 4.700V26.500H0z" fill="#fdcb45" />
        <path d="M5 27V21a2 2 0 0 1 2-2H23a2 2 0 0 1 2 2V27z" fill="#1773c9" />
        <rect x="9" y="22" width="12" height="1.500" rx="0.700" fill="#0d4c91" />
      </svg>
      <span className="relative ml-[26px] flex h-[30px] w-[27px] items-center justify-center">
        <svg viewBox="0 0 27 30" className="absolute inset-0 h-[30px] w-[27px]" fill="#fff">
          <path d="M6 7H21L22 17 13.500 25 5 17z" />
        </svg>
        <SiBrave className="relative size-[30px] shrink-0 text-[#fb4a1e]" />
      </span>
      <span className="relative ml-[27px] flex h-[60px] w-[30px] items-center justify-center">
        <svg viewBox="0 0 30 21" className="h-[21px] w-[30px]">
          <rect width="30" height="21" rx="4.500" fill="#f00" />
          <path d="M12 6.300L19 10.500L12 14.700z" fill="#fff" />
        </svg>
        <span className="absolute bottom-[6px] h-[4px] w-2 rounded-full bg-[#9a9b95]" />
      </span>
      <span className="relative ml-[15px] flex size-[50px] items-center justify-center rounded-[5px] border border-[#3b3e30] bg-[#31352a]">
        <Chrome />
        <span className="absolute top-[4px] right-[4px] size-[20px] rounded-full bg-[radial-gradient(circle_at_40%_35%,#b8b5b0,#8b8885_55%,#4f4c48)]" />
        <span className="absolute bottom-0 h-[4px] w-5 rounded-full bg-[#d6bd8c]" />
      </span>
      <span className="relative ml-[5px] flex size-[50px] items-center justify-center rounded-[5px] bg-[#86464d]">
        <svg viewBox="0 0 30 30" className="size-[30px]">
          <path d="M0.300 10.800L2.500 9L22 23.500V30H21.500L0.300 12.500z" fill="#1084d0" />
          <path d="M0.300 19.200L2.500 21L22 6.500V0H21.500L0.300 17.500z" fill="#0e72bd" />
          <path d="M21.500 0L30 3.800V26.200L21.500 30C22 29.500 22.300 29 22.300 28V2C22.300 1 22 .5 21.500 0z" fill="#29a6f2" />
        </svg>
        <span className="absolute bottom-px h-[4px] w-2 rounded-full bg-[#fd8f9f]" />
      </span>
    </div>
  );
}

function Tray() {
  return (
    <div className="ml-auto flex h-[60px] items-center pr-[25px] text-[14.500px] leading-5 text-white">
      <svg viewBox="0 0 14 8" className="h-2 w-[14px]" fill="none" stroke="#fff" strokeWidth="1.800">
        <path d="M1 7L7 1.300L13 7" />
      </svg>
      <svg viewBox="0 0 22 22" className="ml-[22px] size-[22px]" fill="none" stroke="#e8e8e8" strokeWidth="1.400">
        <path d="M1.500 9.500A8.500 8.500 0 0 1 19 6.500M19.500 2V7H14.500M12 20A8.500 8.500 0 0 1 3 15M2.500 20V15H7.500" />
        <circle cx="16" cy="16" r="5" fill="#ff9800" stroke="none" />
      </svg>
      <div className="ml-[21px] w-[32px] text-center">
        <div>ENG</div>
        <div>IN</div>
      </div>
      <svg viewBox="0 0 22 17" className="ml-[21px] h-[17px] w-[21px]" fill="none" stroke="#fff" strokeWidth="1.500">
        <path d="M1 6A14 14 0 0 1 21 6M4 9A10 10 0 0 1 18 9M6.800 12A6 6 0 0 1 15.200 12" />
        <circle cx="11" cy="14.500" r="1.900" fill="#fff" stroke="none" />
      </svg>
      <svg viewBox="0 0 21 17" className="ml-[9px] h-[17px] w-[21px]" fill="none" stroke="#fff" strokeWidth="1.400">
        <path d="M1 5.500H4.500L9 1.500V15.500L4.500 11.500H1z" />
        <path d="M11.500 5.500A5 5 0 0 1 11.500 11.500" />
        <path d="M14 3.500A8 8 0 0 1 14 13.500M17 1.500A11 11 0 0 1 17 15.500" stroke="#70736d" />
      </svg>
      <svg viewBox="0 0 21 14" className="ml-[9px] h-[14px] w-[21px]" fill="none" stroke="#fff" strokeWidth="1.400">
        <rect x="1" y="1" width="16.500" height="12" rx="3" />
        <rect x="3" y="3" width="7.500" height="8" rx="1" fill="#fff" stroke="none" />
        <path d="M19.500 5V9" strokeWidth="2" strokeLinecap="round" />
      </svg>
      <div className="ml-[20px] pb-[2px] text-right tracking-[0.200px] whitespace-nowrap">
        <div>13:19</div>
        <div>11-04-2025</div>
      </div>
      <svg viewBox="0 0 19 19" className="ml-[10px] size-[19px]" fill="none" stroke="#fff" strokeWidth="1.400">
        <path d="M10 1.500C5.500 1 3.300 4 3.300 7.500V11L1.500 14.500H16L14.700 11.500V10M6.500 15a2.700 2.700 0 0 0 5 0M12 1.500H17L13 6H17.500M7 5.500H11L7.500 10H11.500" />
      </svg>
    </div>
  );
}

function Taskbar() {
  return (
    <div className="flex h-[60px] shrink-0 items-center border-t border-[#3a4236] bg-[linear-gradient(to_right,#26302d_0%,#1f2f24_12%,#232a20_28%,#22271b_50%,#232818_75%,#25291a_80%,#222d1c_88%,#262f2d_94%,#272e2b_100%)]">
      <svg viewBox="0 0 33 38" className="mb-[6px] ml-[27px] h-[38px] w-[33px]">
        <circle cx="14" cy="22" r="13" fill="#f7a823" />
        <path d="M6 37a6 6 0 0 1-.5-11.500A8 8 0 0 1 21 24.500A6.500 6.500 0 0 1 22 37z" fill="#b5cdf3" />
        <path d="M6 37a5 5 0 0 1 0-8.500A9 9 0 0 1 19 29 5 5 0 0 1 25 34 5 5 0 0 1 22 37z" fill="#d4e2f9" />
        <circle cx="22" cy="10" r="10" fill="#c42b1c" />
        <text x="22" y="15" fontSize="13.500" textAnchor="middle" fill="#fff">5</text>
      </svg>
      <div className="ml-[4px] w-[466px] pb-[3px] text-[14.250px] leading-5 tracking-[-0.050px] text-white">
        <div>87°F</div>
        <div className="text-[#c3c6c3]">Partly sunny</div>
      </div>
      <svg viewBox="0 0 29 29" className="size-[29px]">
        <defs>
          <linearGradient id="win" x1="0" y1="0" x2="1" y2="1">
            <stop offset="0" stopColor="#72e8fc" />
            <stop offset="1" stopColor="#0b93f5" />
          </linearGradient>
        </defs>
        <path d="M0 1A1 1 0 0 1 1 0H14V14H0zM15 0H28A1 1 0 0 1 29 1V14H15zM0 15H14V29H1A1 1 0 0 1 0 28zM15 15H29V28A1 1 0 0 1 28 29H15z" fill="url(#win)" />
      </svg>
      <div className="ml-[18px] flex h-[38px] w-[273px] items-center rounded-full bg-[#f3f3f1] pr-[10px] pl-[14px]">
        <svg viewBox="0 0 18 19" className="h-[19px] w-[18px]" fill="none" stroke="#222" strokeWidth="2">
          <circle cx="8" cy="8" r="6.800" />
          <path d="M13 13L17.500 18.200" strokeWidth="2.400" />
        </svg>
        <span className="ml-[13px] text-[16.500px] tracking-[-0.150px] text-[#5f5f5f]">Search</span>
        <span className="ml-auto">
          <Sparkles />
        </span>
      </div>
      <TaskbarIcons />
      <Tray />
    </div>
  );
}

export default function App() {
  return (
    <div className="flex h-[1080px] w-[1920px] flex-col overflow-hidden bg-white font-['Open_Sans','Noto_Sans_CJK_SC',sans-serif]">
      <TabStrip />
      <Toolbar />
      <BookmarkBar />
      <Page />
      <Taskbar />
    </div>
  );
}
